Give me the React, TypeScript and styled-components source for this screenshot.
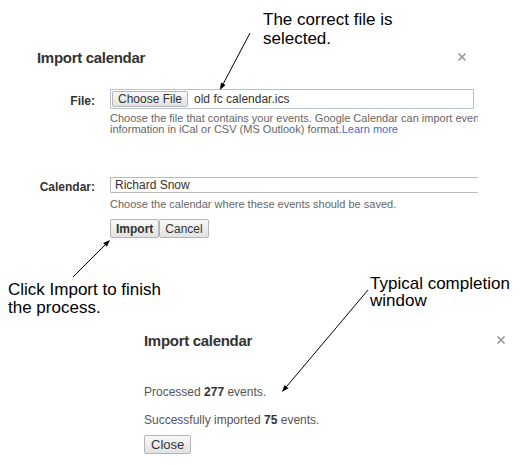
import React from "react";
import styled, { createGlobalStyle } from "styled-components";

const Global = createGlobalStyle`
  html, body { margin: 0; padding: 0; background: #fff; }
  body { font-family: "Liberation Sans", Arial, sans-serif; }
`;

const Page = styled.div`
  position: relative;
  width: 532px;
  height: 465px;
  overflow: hidden;
  background: #fff;
`;

const Note = styled.div<{ $lh?: number }>`
  font-size: 17px;
  line-height: ${(p) => p.$lh ?? 19}px;
  color: #000;
`;

const TopNote = styled(Note)`
  padding: 10px 0 0 263px;
  height: 38px;
`;

const Dialog = styled.div<{ $left: number; $right: number }>`
  padding-left: ${(p) => p.$left}px;
  width: ${(p) => p.$right - p.$left}px;
  overflow: hidden;
  color: #444;
`;

const TitleRow = styled.div<{ $pr: number }>`
  display: flex;
  align-items: center;
  justify-content: space-between;
  height: 18px;
  padding-right: ${(p) => p.$pr}px;
`;

const Title = styled.div`
  font-size: 15px;
  font-weight: bold;
  color: #333;
  letter-spacing: -0.3px;
`;

const CloseX = styled.svg`
  width: 10px;
  height: 10px;
  display: block;
`;

const Form = styled.div`
  display: grid;
  grid-template-columns: 58px 368px;
  column-gap: 15px;
  margin-top: 23px;
`;

const Label = styled.div<{ $pt: number }>`
  font-size: 12px;
  font-weight: bold;
  color: #333;
  text-align: right;
  padding-top: ${(p) => p.$pt}px;
`;

const Field = styled.div`
  min-width: 0;
`;

const FileBox = styled.div`
  box-sizing: border-box;
  width: 364px;
  height: 20px;
  border: 1px solid #b8c3cf;
  display: flex;
  align-items: center;
  gap: 6px;
  padding-left: 1px;
  font-size: 12px;
  color: #333;
`;

const Button = styled.button<{ $bold?: boolean }>`
  box-sizing: border-box;
  height: 16px;
  padding: 0 5px;
  border: 1px solid #b5b5b5;
  border-radius: 2px;
  background: linear-gradient(#f8f8f8, #e2e2e2);
  font-family: "Liberation Sans", Arial, sans-serif;
  font-size: 12px;
  font-weight: ${(p) => (p.$bold ? "bold" : "normal")};
  color: #333;
  line-height: 1;
  margin: 0;
`;

const ActionButton = styled(Button)`
  height: 19px;
  padding: 0 5px;
`;

const Hint = styled.div<{ $w: number; $mt: number }>`
  width: ${(p) => p.$w}px;
  margin-top: ${(p) => p.$mt}px;
  font-size: 11px;
  line-height: 11px;
  color: #666;
`;

const Link = styled.span`
  color: #3b6fd4;
`;

const TextBox = styled.div`
  box-sizing: border-box;
  width: 420px;
  height: 16px;
  border: 1px solid #bbb;
  border-right: none;
  padding-left: 4px;
  font-size: 12px;
  line-height: 14px;
  color: #333;
`;

const Spacer = styled.div<{ $h: number }>`
  height: ${(p) => p.$h}px;
  grid-column: 1 / -1;
`;

const Buttons = styled.div`
  display: flex;
  margin-top: 9px;
`;

const MiddleRow = styled.div`
  display: flex;
  justify-content: space-between;
  align-items: flex-start;
  margin-top: 37px;
  height: 56px;
`;

const LeftNote = styled(Note)`
  margin: 6px 0 0 8px;
`;

const RightNote = styled(Note)`
  width: 162px;
`;

const Message = styled.p<{ $mt: number }>`
  margin: ${(p) => p.$mt}px 0 0 0;
  font-size: 12px;
  line-height: 14px;
  color: #555;
  b { color: #333; }
`;

const CloseButton = styled(Button)`
  height: 19px;
  padding: 0 6px;
  margin-top: 8px;
  font-size: 13px;
`;

const Overlay = styled.svg`
  position: absolute;
  left: 0;
  top: 0;
  width: 532px;
  height: 465px;
  pointer-events: none;
`;

const X = () => (
  <CloseX viewBox="0 0 10 10">
    <path d="M1.5 1.5 L8.5 8.5 M8.5 1.5 L1.5 8.5" stroke="#999" strokeWidth="1.7" />
  </CloseX>
);

const Arrow = ({ x1, y1, x2, y2 }: { x1: number; y1: number; x2: number; y2: number }) => {
  const a = Math.atan2(y2 - y1, x2 - x1);
  const L = 7;
  const W = 2.6;
  const bx = x2 - L * Math.cos(a);
  const by = y2 - L * Math.sin(a);
  const px = -Math.sin(a) * W;
  const py = Math.cos(a) * W;
  return (
    <g>
      <line x1={x1} y1={y1} x2={bx} y2={by} stroke="#000" strokeWidth="1" />
      <polygon points={`${x2},${y2} ${bx + px},${by + py} ${bx - px},${by - py}`} fill="#000" />
    </g>
  );
};

export default function App() {
  return (
    <Page>
      <Global />
      <TopNote>
        The correct file is
        <br />
        selected.
      </TopNote>

      <Dialog $left={37} $right={478}>
        <TitleRow $pr={11}>
          <Title>Import calendar</Title>
          <X />
        </TitleRow>
        <Form>
          <Label $pt={5}>File:</Label>
          <Field>
            <FileBox>
              <Button>Choose File</Button>
              <span>old fc calendar.ics</span>
            </FileBox>
            <Hint $w={380} $mt={4}>
              Choose the file that contains your events. Google Calendar can import event
              information in iCal or CSV (MS Outlook) format.<Link>Learn more</Link>
            </Hint>
          </Field>
          <Spacer $h={42} />
          <Label $pt={3}>Calendar:</Label>
          <Field>
            <TextBox>Richard Snow</TextBox>
            <Hint $w={380} $mt={6}>
              Choose the calendar where these events should be saved.
            </Hint>
            <Buttons>
              <ActionButton $bold>Import</ActionButton>
              <ActionButton>Cancel</ActionButton>
            </Buttons>
          </Field>
        </Form>
      </Dialog>

      <MiddleRow>
        <LeftNote $lh={18}>
          Click Import to finish
          <br />
          the process.
        </LeftNote>
        <RightNote $lh={17}>
          Typical completion
          <br />
          window
        </RightNote>
      </MiddleRow>

      <Dialog $left={144} $right={506}>
        <TitleRow $pr={0}>
          <Title>Import calendar</Title>
          <X />
        </TitleRow>
        <Message $mt={36}>
          Processed <b>277</b> events.
        </Message>
        <Message $mt={14}>
          Successfully imported <b>75</b> events.
        </Message>
        <CloseButton>Close</CloseButton>
      </Dialog>

      <Overlay viewBox="0 0 532 465">
        <Arrow x1={250} y1={33} x2={220} y2={90} />
        <Arrow x1={73} y1={277} x2={110} y2={240} />
        <Arrow x1={368} y1={290} x2={282} y2={392} />
      </Overlay>
    </Page>
  );
}
